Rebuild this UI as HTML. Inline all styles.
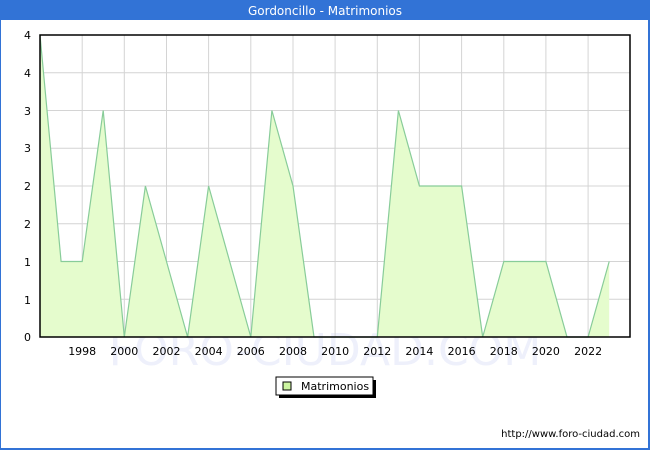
<!DOCTYPE html>
<html><head><style>
body{margin:0;width:650px;height:450px;overflow:hidden;background:#fff;font-family:"DejaVu Sans","Liberation Sans",sans-serif;}
</style></head><body>
<svg width="650" height="450" xmlns="http://www.w3.org/2000/svg" style="position:absolute;left:0;top:0">
<rect x="0" y="0" width="650" height="450" fill="#3273d6"/>
<rect x="1" y="20" width="647" height="428" fill="#fff"/>
<text x="325" y="15" fill="#fff" font-size="12" text-anchor="middle" font-family="DejaVu Sans, sans-serif">Gordoncillo - Matrimonios</text>
<text x="325" y="365" fill="#eef0fb" font-size="44" text-anchor="middle" font-family="DejaVu Sans, sans-serif">FORO-CIUDAD.COM</text>
<g stroke="#d4d4d4" stroke-width="1">
<line x1="40" y1="72.75" x2="630" y2="72.75"/><line x1="40" y1="110.5" x2="630" y2="110.5"/>
<line x1="40" y1="148.25" x2="630" y2="148.25"/><line x1="40" y1="186" x2="630" y2="186"/>
<line x1="40" y1="223.75" x2="630" y2="223.75"/><line x1="40" y1="261.5" x2="630" y2="261.5"/>
<line x1="40" y1="299.25" x2="630" y2="299.25"/>
<line x1="82.2" y1="35" x2="82.2" y2="337"/><line x1="124.3" y1="35" x2="124.3" y2="337"/>
<line x1="166.5" y1="35" x2="166.5" y2="337"/><line x1="208.6" y1="35" x2="208.6" y2="337"/>
<line x1="250.8" y1="35" x2="250.8" y2="337"/><line x1="293" y1="35" x2="293" y2="337"/>
<line x1="335.1" y1="35" x2="335.1" y2="337"/><line x1="377.3" y1="35" x2="377.3" y2="337"/>
<line x1="419.4" y1="35" x2="419.4" y2="337"/><line x1="461.6" y1="35" x2="461.6" y2="337"/>
<line x1="503.8" y1="35" x2="503.8" y2="337"/><line x1="545.9" y1="35" x2="545.9" y2="337"/>
<line x1="588.1" y1="35" x2="588.1" y2="337"/>
</g>
<polygon fill="#e5fccd" stroke="none" points="40,337 40,35 61.1,261.5 82.2,261.5 103.2,110.5 124.3,337 145.4,186 166.5,261.5 187.6,337 208.6,186 229.7,261.5 250.8,337 271.9,110.5 293,186 314,337 335.1,337 356.2,337 377.3,337 398.4,110.5 419.4,186 440.5,186 461.6,186 482.7,337 503.8,261.5 524.8,261.5 545.9,261.5 567,337 588.1,337 609.2,261.5 609.2,337"/>
<polyline fill="none" stroke="#88cc99" stroke-width="1.2" points="40,35 61.1,261.5 82.2,261.5 103.2,110.5 124.3,337 145.4,186 166.5,261.5 187.6,337 208.6,186 229.7,261.5 250.8,337 271.9,110.5 293,186 314,337 335.1,337 356.2,337 377.3,337 398.4,110.5 419.4,186 440.5,186 461.6,186 482.7,337 503.8,261.5 524.8,261.5 545.9,261.5 567,337 588.1,337 609.2,261.5"/>
<rect x="40" y="35" width="590" height="302" fill="none" stroke="#000" stroke-width="1.5"/>
<g font-size="11" fill="#000" text-anchor="end">
<text x="31" y="39">4</text><text x="31" y="77">4</text><text x="31" y="115">3</text><text x="31" y="152">3</text>
<text x="31" y="190">2</text><text x="31" y="228">2</text><text x="31" y="266">1</text><text x="31" y="304">1</text><text x="31" y="341">0</text>
</g>
<g font-size="11" fill="#000" text-anchor="middle">
<text x="82.2" y="355">1998</text><text x="124.3" y="355">2000</text><text x="166.5" y="355">2002</text>
<text x="208.6" y="355">2004</text><text x="250.8" y="355">2006</text><text x="293" y="355">2008</text>
<text x="335.1" y="355">2010</text><text x="377.3" y="355">2012</text><text x="419.4" y="355">2014</text>
<text x="461.6" y="355">2016</text><text x="503.8" y="355">2018</text><text x="545.9" y="355">2020</text>
<text x="588.1" y="355">2022</text>
</g>
<rect x="279" y="380" width="97" height="18" fill="#000"/>
<rect x="276" y="377" width="97" height="18" fill="#fff" stroke="#000" stroke-width="1"/>
<rect x="283" y="382" width="8" height="8" fill="#ccf5a0" stroke="#000" stroke-width="1"/>
<text x="301" y="390" font-size="11" fill="#000">Matrimonios</text>
<text x="640" y="437" font-size="10" fill="#000" text-anchor="end">http://www.foro-ciudad.com</text>
</svg>
</body></html>
